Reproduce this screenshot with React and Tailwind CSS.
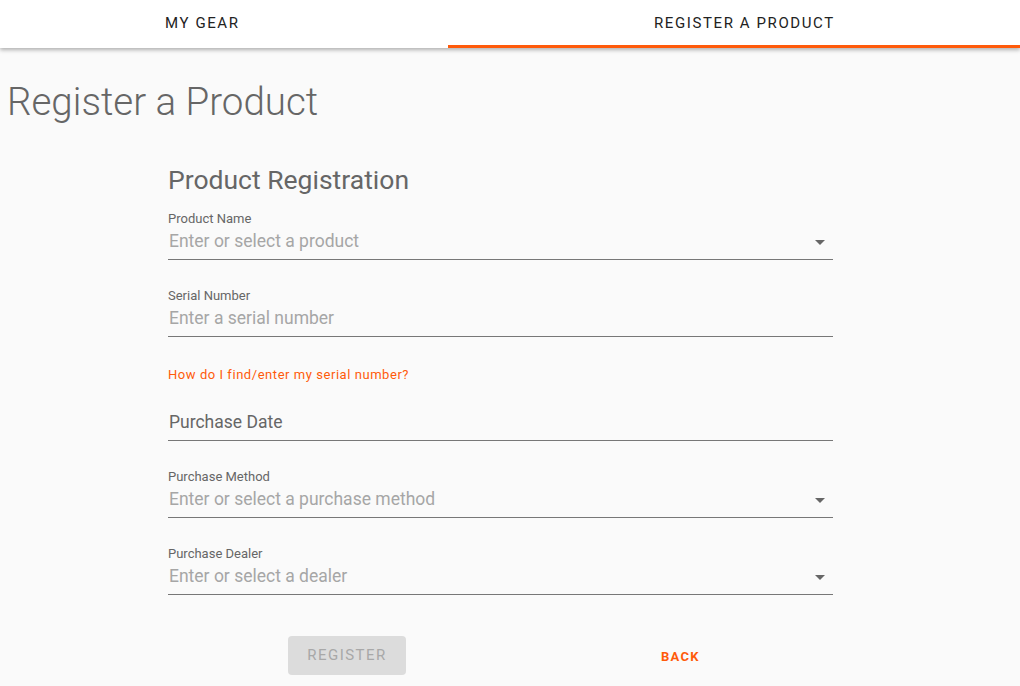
import { useState } from 'react';

const orange = 'text-[#ff5a0a]';

const Caret = () => (
  <svg width="10" height="5" viewBox="0 0 10 5" className="absolute right-[8px] top-[29px]">
    <path d="M0 0h10L5 5z" fill="#666" />
  </svg>
);

const Field = ({ label, placeholder, select }) => (
  <div className="relative h-[77px]">
    <div className="text-[13px] leading-[16px] text-[#666]">{label}</div>
    <div className="h-[33px] pt-[3px] border-b border-[#777] text-[17.5px] leading-[22px] text-[#a6a6a6] pl-px">{placeholder}</div>
    {select && <Caret />}
  </div>
);

const App = () => {
  const [tab] = useState('register');

  return (
    <div className="min-h-[686px] bg-[#fafafa] font-['Roboto',sans-serif]">
      {/* Tabs */}
      <div className="relative z-10 flex h-[48px] bg-white shadow-[0_2px_4px_rgba(0,0,0,0.3)]">
        <div className="w-[448px] pl-[165px] pt-[12px] text-[15px] tracking-[1.6px] text-[#222]">MY GEAR</div>
        <div className={`flex-1 pl-[206px] pt-[12px] text-[15px] tracking-[1.6px] text-[#222] ${tab === 'register' ? 'border-b-[3px] border-[#ff5a0a]' : ''}`}>
          REGISTER A PRODUCT
        </div>
      </div>

      <h1 className="pl-[7px] pt-[32px] text-[38.5px] leading-[44px] font-light text-[#666]">Register a Product</h1>

      {/* Form */}
      <div className="ml-[168px] w-[665px] pt-[40px]">
        <h2 className="text-[26.5px] leading-[32px] text-[#666]">Product Registration</h2>
        <div className="pt-[15px]">
          <Field label="Product Name" placeholder="Enter or select a product" select />
          <Field label="Serial Number" placeholder="Enter a serial number" />
        </div>
        <div className={`pt-[2px] text-[13px] leading-[16px] tracking-[0.55px] ${orange}`}>How do I find/enter my serial number?</div>
        <div className="pt-[26px] pb-[28px]">
          <div className="h-[32px] border-b border-[#777] text-[17.5px] leading-[26px] text-[#666] pl-px">Purchase Date</div>
        </div>
        <Field label="Purchase Method" placeholder="Enter or select a purchase method" select />
        <Field label="Purchase Dealer" placeholder="Enter or select a dealer" select />
        <div className="flex items-center pt-[13px]">
          <button className="ml-[120px] h-[39px] w-[118px] rounded-[4px] bg-[#dcdcdc] text-[15px] tracking-[1.5px] text-[#a8a8a8]">REGISTER</button>
          <button className={`ml-[255px] mt-[3px] text-[13px] font-bold tracking-[1.3px] ${orange}`}>BACK</button>
        </div>
      </div>
    </div>
  );
};

export default App;
